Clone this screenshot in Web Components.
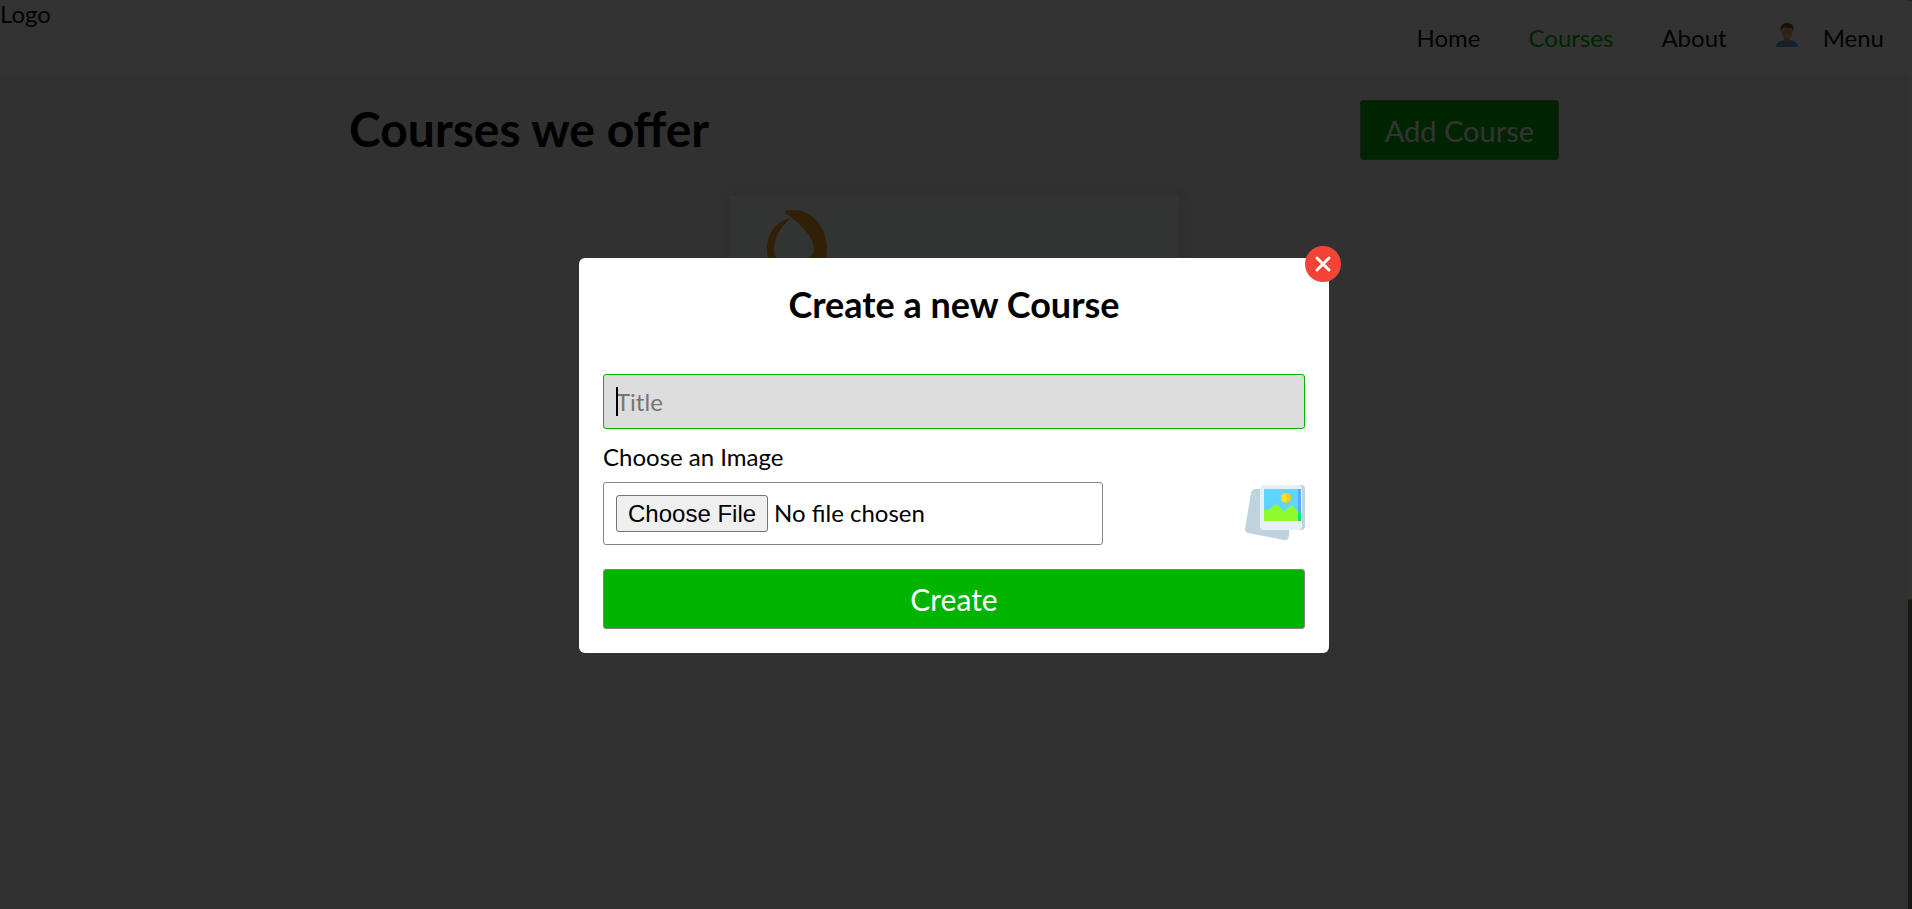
<!DOCTYPE html>
<html lang="en">
<head>
  <meta charset="UTF-8">
  <meta name="viewport" content="width=device-width, initial-scale=1.0">
  <title>Courses</title>
  <style>
    :root {
      --green: #00b400;
      --border: #858585;
    }

    body {
      margin: 0;
      font-family: Lato, "Liberation Sans", sans-serif;
      font-size: 24px;
      color: #000;
      background-color: #f2f2f2;
    }
  </style>
</head>
<body>
  <course-app></course-app>

  <script>
    class SiteHeader extends HTMLElement {
      constructor() {
        super();
        this.attachShadow({ mode: 'open' });
        this.render();
      }

      render() {
        this.shadowRoot.innerHTML = `
          <style>
            :host {
              display: flex;
              justify-content: space-between;
              box-sizing: border-box;
              height: 76px;
              padding-bottom: 2px;
              line-height: 27px;
              color: #111;
              background-color: #fff;
            }

            nav {
              display: flex;
              align-items: center;
              padding-right: 24px;
            }

            ul {
              display: flex;
              align-items: baseline;
              gap: 48px;
              margin: 0;
              padding: 0;
              list-style: none;
            }

            a {
              color: inherit;
              text-decoration: none;
            }

            a.active {
              color: var(--green);
            }

            button {
              display: flex;
              align-items: baseline;
              gap: 24px;
              padding: 0;
              border: 0;
              background: none;
              color: inherit;
              font: inherit;
            }
          </style>

          <span><slot></slot></span>
          <nav>
            <ul>
              <li><a href="#home">Home</a></li>
              <li><a href="#courses" class="active">Courses</a></li>
              <li><a href="#about">About</a></li>
              <li>
                <button type="button">
                  <svg width="24" height="24" viewBox="0 0 24 24" aria-hidden="true">
                    <path d="M1 24c0-4 3-6 8-7h6c5 1 8 3 8 7z" fill="#5ea6e8"/>
                    <path d="M9 13h6v4l-3 3-3-3z" fill="#d99468"/>
                    <ellipse cx="12" cy="9" rx="5.500" ry="7" fill="#eeb083"/>
                    <path d="M6 9C4 3 8 0 12 0c5 0 8 3 6 9l-1-4c-3 0-6 0-8-1L7 6z" fill="#7d4d38"/>
                    <circle cx="10" cy="9" r=".6" fill="#6b4634"/>
                    <circle cx="14" cy="9" r=".6" fill="#6b4634"/>
                    <path d="M10 12q2 2 4 0z" fill="#fff"/>
                  </svg>
                  Menu
                </button>
              </li>
            </ul>
          </nav>
        `;
      }
    }

    class CourseCard extends HTMLElement {
      constructor() {
        super();
        this.attachShadow({ mode: 'open' });
        this.render();
      }

      render() {
        this.shadowRoot.innerHTML = `
          <style>
            :host {
              display: block;
              width: 450px;
              background-color: #fafffc;
              box-shadow: 0 0 12px rgba(0, 0, 0, 0.1);
            }

            svg {
              display: block;
              width: 100%;
            }
          </style>

          <svg viewBox="0 0 450 300" aria-hidden="true">
            <g fill="#f99a2a">
              <path d="M56 17C55 14 61 14 66 14c18 1 32 18 32 39 0 20-14 36-31 36 10-5 18-20 18-35C85 38 66 24 56 17z"/>
              <path d="M61 22C46 26 37 39 38 56c1 18 12 31 29 33-11-7-21-20-22-34 0-14 6-23 15-31z"/>
              <path d="M46 60c7 10 29 12 38-3l7 5c-8 23-37 24-48 8z"/>
            </g>
          </svg>
        `;
      }
    }

    class AppModal extends HTMLElement {
      constructor() {
        super();
        this.attachShadow({ mode: 'open' });
        this.render();
      }

      render() {
        this.shadowRoot.innerHTML = `
          <style>
            :host {
              position: fixed;
              inset: 0 4px 0 0;
              display: flex;
              justify-content: center;
              align-items: center;
              padding-top: 2px;
              background-color: rgba(0, 0, 0, 0.8);
            }

            .dialog {
              position: relative;
              box-sizing: border-box;
              width: 750px;
              max-width: 90%;
              padding: 24px;
              border-radius: 6px;
              background-color: #fff;
            }

            h2 {
              margin: 0 0 48px;
              font-size: 36px;
              line-height: 44px;
              text-align: center;
            }

            .close {
              position: absolute;
              top: -12px;
              right: -12px;
              padding: 0;
              border: 0;
              background: none;
            }

            svg {
              display: block;
            }
          </style>

          <div class="dialog" role="dialog" aria-labelledby="heading">
            <button class="close" type="button" aria-label="Close">
              <svg width="36" height="36" viewBox="0 0 36 36">
                <circle cx="18" cy="18" r="18" fill="#f44336"/>
                <path d="M12 12l12 12m0-12L12 24" stroke="#fafafa" stroke-width="3" stroke-linecap="round"/>
              </svg>
            </button>
            <h2 id="heading"><slot name="title"></slot></h2>
            <slot></slot>
          </div>
        `;
      }
    }

    class CourseForm extends HTMLElement {
      constructor() {
        super();
        this.attachShadow({ mode: 'open' });
        this.render();
      }

      render() {
        this.shadowRoot.innerHTML = `
          <style>
            :host {
              display: block;
            }

            input {
              box-sizing: border-box;
              border: 1px solid var(--border);
              border-radius: 3px;
              font: inherit;
            }

            .title {
              position: relative;
              margin-bottom: 13px;
            }

            .title input {
              display: block;
              width: 100%;
              height: 55px;
              padding: 12px;
              border-color: var(--green);
              outline: none;
              background-color: #ddd;
              caret-color: transparent;
            }

            .title input::placeholder {
              color: #757575;
            }

            /* text cursor of the focused field */
            .caret {
              position: absolute;
              top: 13px;
              left: 13px;
              width: 2px;
              height: 29px;
              background-color: #000;
            }

            label {
              display: block;
              margin-bottom: 10px;
              line-height: 30px;
            }

            .image {
              display: flex;
              justify-content: space-between;
              align-items: center;
              margin-bottom: 24px;
            }

            .image input {
              width: 500px;
              padding: 12px;
            }

            .image input::file-selector-button {
              box-sizing: border-box;
              height: 37px;
              margin: 0 6px 0 0;
              padding: 1px 11px;
              border: 1px solid #767676;
              border-radius: 3px;
              background-color: #efefef;
              color: #000;
              font: 24px "Liberation Sans", Arial, sans-serif;
            }

            green-button {
              display: block;
              --button-size: 30px;
            }
          </style>

          <form>
            <div class="title">
              <input type="text" placeholder="Title" aria-label="Title">
              <span class="caret"></span>
            </div>
            <label for="image">Choose an Image</label>
            <div class="image">
              <input id="image" type="file">
              <svg width="60" height="60" viewBox="0 0 60 60" aria-hidden="true">
                <path d="M10 5h20l16 14-2 33q-1 5-5 4L3 49q-3-1-3-4L6 9q1-4 4-4z" fill="#bed3dd"/>
                <rect x="30" y="1" width="30" height="45" rx="4" fill="#bed3dd"/>
                <rect x="15" y="1" width="42" height="45" rx="4" fill="#e4f2f8"/>
                <path d="M19 5h37v32H19z" fill="#60d5ff"/>
                <path d="M53 5h3v28h-3z" fill="#58acff"/>
                <circle cx="41" cy="14" r="5" fill="#ffc91b"/>
                <ellipse cx="39" cy="14" rx="3" ry="4" fill="#ffe31f"/>
                <path d="M19 26h5l7-6 8 7 8-6 9 9v7H19z" fill="#90fa2d"/>
                <path d="M53 27l3 3v7h-3z" fill="#00e878"/>
              </svg>
            </div>
            <green-button>Create</green-button>
          </form>
        `;
      }
    }

    class GreenButton extends HTMLElement {
      constructor() {
        super();
        this.attachShadow({ mode: 'open' });
        this.render();
      }

      render() {
        this.shadowRoot.innerHTML = `
          <style>
            :host {
              display: inline-block;
            }

            button {
              display: block;
              width: 100%;
              height: 60px;
              padding: 0 24px;
              border: 1px solid var(--border);
              border-radius: 3px;
              background-color: var(--green);
              color: #fff;
              font: inherit;
              font-size: var(--button-size, 29px);
            }
          </style>

          <button type="button"><slot></slot></button>
        `;
      }
    }

    // Slim page scrollbar: rounded thumb over a dark track
    class ScrollTrack extends HTMLElement {
      constructor() {
        super();
        this.attachShadow({ mode: 'open' });
        this.render();
      }

      render() {
        this.shadowRoot.innerHTML = `
          <style>
            :host {
              display: block;
              background-color: #191815;
            }

            div {
              height: 66%;
              border-radius: 4px;
              background-color: #333;
            }
          </style>

          <div></div>
        `;
      }
    }

    class CourseApp extends HTMLElement {
      constructor() {
        super();
        this.attachShadow({ mode: 'open' });
        this.render();
      }

      render() {
        this.shadowRoot.innerHTML = `
          <style>
            :host {
              display: grid;
              grid-template-columns: 1fr 4px;
              height: 100vh;
              overflow: hidden;
            }

            main {
              max-width: 1210px;
              margin: 0 auto;
              padding-top: 24px;
            }

            .top {
              display: flex;
              justify-content: space-between;
              margin-bottom: 36px;
            }

            h1 {
              margin: 0;
              font-size: 48px;
              line-height: 58px;
            }

            course-card {
              margin: 0 auto;
            }
          </style>

          <div>
            <site-header>Logo</site-header>
            <main>
              <div class="top">
                <h1>Courses we offer</h1>
                <green-button>Add Course</green-button>
              </div>
              <course-card></course-card>
            </main>
          </div>
          <scroll-track></scroll-track>
          <app-modal>
            <span slot="title">Create a new Course</span>
            <course-form></course-form>
          </app-modal>
        `;
      }
    }

    customElements.define('green-button', GreenButton);
    customElements.define('site-header', SiteHeader);
    customElements.define('course-card', CourseCard);
    customElements.define('scroll-track', ScrollTrack);
    customElements.define('course-form', CourseForm);
    customElements.define('app-modal', AppModal);
    customElements.define('course-app', CourseApp);
  </script>
</body>
</html>
